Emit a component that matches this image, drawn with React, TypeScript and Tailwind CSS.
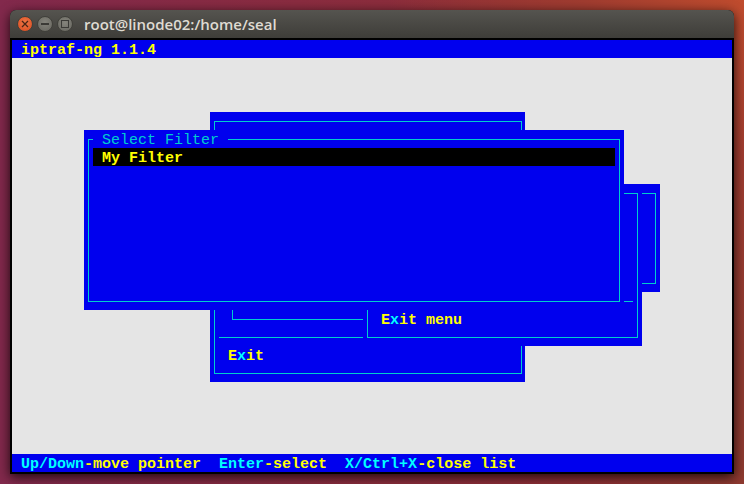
const mono = "font-['Liberation_Mono',monospace] text-[15px] leading-[22px] whitespace-pre"

// E x i t with the hotkey letter picked out, same as ncurses draws it
function MenuItem({ label, className }: { label: string; className: string }) {
  return (
    <div className={`absolute font-bold text-[#ffff00] ${mono} ${className}`}>
      {label[0]}
      <span className="text-[#00ffff]">{label[1]}</span>
      {label.slice(2)}
    </div>
  )
}

function TitleButtons() {
  return (
    <div className="flex items-center gap-[4px]">
      <div className="w-[16px] h-[16px] rounded-full bg-[radial-gradient(circle_at_50%_40%,#f07746,#d9491e)] border border-[#41403b] flex items-center justify-center">
        <svg width="8" height="8" viewBox="0 0 8 8">
          <path d="M1 1 7 7M7 1 1 7" stroke="#4a2415" strokeWidth="1.3" />
        </svg>
      </div>
      <div className="w-[16px] h-[16px] rounded-full bg-[radial-gradient(circle_at_50%_40%,#85847c,#66655e)] border border-[#41403b] flex items-center justify-center">
        <div className="w-[8px] h-[2px] bg-[#3b3a36]" />
      </div>
      <div className="w-[16px] h-[16px] rounded-full bg-[radial-gradient(circle_at_50%_40%,#85847c,#66655e)] border border-[#41403b] flex items-center justify-center">
        <div className="w-[8px] h-[8px] border border-[#3b3a36]" />
      </div>
    </div>
  )
}

export default function App() {
  return (
    <div className="w-[744px] h-[484px] overflow-hidden bg-[radial-gradient(circle_at_100%_0%,#c04c2e_0%,#a03c30_18%,transparent_40%),linear-gradient(90deg,#82294c_0%,#8a2c40_40%,#8f2f36_75%,#8e3a30_100%)] pt-[10px] pl-[10px]">
      <div className="w-[724px] h-[464px] flex flex-col rounded-t-[6px] overflow-hidden bg-black shadow-[0_3px_12px_rgba(0,0,0,0.8)]">

        {/* Title bar */}
        <div className="h-[28px] shrink-0 flex items-center pl-[7px] bg-[linear-gradient(#55544f,#3e3d39)]">
          <TitleButtons />
          <span className="ml-[11px] font-['Open_Sans',sans-serif] font-semibold text-[15px] text-[#dfdbd2]">
            root@linode02:/home/seal
          </span>
        </div>

        {/* Terminal */}
        <div className="mt-[2px] mx-[2px] w-[720px] h-[432px] flex flex-col bg-[#e5e5e5]">
          <div className={`h-[18px] shrink-0 pl-[9px] bg-[#0000ee] font-bold text-[#ffff00] ${mono}`}>iptraf-ng 1.1.4</div>

          <div className="relative flex-1">
            {/* Main menu */}
            <div className="absolute left-[198px] top-[54px] w-[315px] h-[270px] bg-[#0000ee]">
              <div className="absolute left-[4px] top-[9px] w-[308px] h-[253px] border border-[#00cdcd]" />
              <div className="absolute left-[9px] top-[225px] w-[145px] h-px bg-[#00cdcd]" />
            </div>
            <div className="absolute left-[220px] top-[252px] w-[132px] h-[10px] border-l border-b border-[#00cdcd]" />
            <MenuItem label="Exit" className="left-[216px] top-[288px]" />

            {/* Submenu */}
            <div className="absolute left-[351px] top-[126px] w-[279px] h-[162px] bg-[#0000ee]">
              <div className="absolute left-[4px] top-[9px] w-[271px] h-[145px] border border-[#00cdcd]" />
            </div>
            <MenuItem label="Exit menu" className="left-[369px] top-[252px]" />

            {/* Side panel */}
            <div className="absolute left-[626px] top-[126px] w-[22px] h-[108px] bg-[#0000ee]">
              <div className="absolute left-[4px] top-[9px] w-[14px] h-[91px] border-t border-r border-b border-[#00cdcd]" />
            </div>
            <div className="absolute left-[612px] top-[243px] w-[9px] h-px bg-[#00cdcd]" />

            {/* Filter list */}
            <div className="absolute left-[72px] top-[72px] w-[540px] h-[180px] bg-[#0000ee]">
              <div className="absolute left-[4px] top-[9px] w-[532px] h-[163px] border border-[#00cdcd]" />
              <div className={`absolute left-[9px] top-0 h-[18px] w-[135px] pl-[9px] bg-[#0000ee] text-[#00cdcd] ${mono}`}>Select Filter</div>
              <div className={`absolute left-[9px] top-[18px] w-[522px] h-[18px] pl-[9px] bg-black font-bold text-[#ffff00] ${mono}`}>My Filter</div>
            </div>
          </div>

          <div className={`h-[18px] shrink-0 pl-[9px] bg-[#0000ee] font-bold text-[#ffff00] ${mono}`}>
            <span className="text-[#00ffff]">Up/Down</span>-move pointer{'  '}
            <span className="text-[#00ffff]">Enter</span>-select{'  '}
            <span className="text-[#00ffff]">X/Ctrl+X</span>-close list
          </div>
        </div>
      </div>
    </div>
  )
}
